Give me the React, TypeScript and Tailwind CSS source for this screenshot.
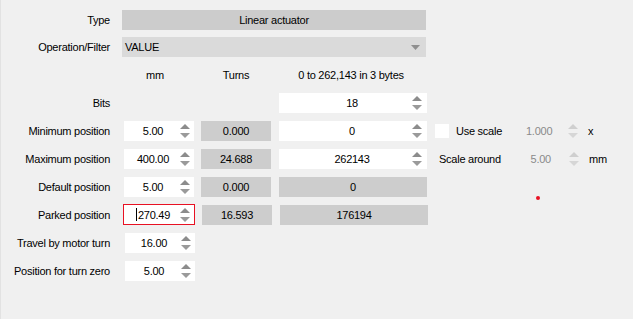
import React from "react";

function Spin({ disabled = false }: { disabled?: boolean }) {
  const up = disabled ? "#cfcfcf" : "#8c8c8c";
  const down = disabled ? "#d6d6d6" : "#9a9a9a";
  return (
    <div className="flex w-[14px] flex-col items-center justify-center gap-[4px]">
      <svg width="10" height="5" viewBox="0 0 10 5">
        <polygon points="0,5 5,0 10,5" fill={up} />
      </svg>
      <svg width="10" height="5" viewBox="0 0 10 5">
        <polygon points="0,0 10,0 5,5" fill={down} />
      </svg>
    </div>
  );
}

function NumInput({ value, active = false }: { value: string; active?: boolean }) {
  return (
    <div
      className={
        active
          ? "flex h-[21px] w-[72px] -my-px -ml-px items-center border border-[#e81123] bg-white pr-[2px]"
          : "flex h-[20px] w-[70px] items-center bg-white pr-[2px]"
      }
    >
      <span className="flex-1 pl-[4px] text-center">
        {active && <span className="mr-px inline-block h-[13px] w-px translate-y-[2px] bg-black" />}
        {value}
      </span>
      <Spin />
    </div>
  );
}

function WideInput({ value }: { value: string }) {
  return (
    <div className="flex h-[20px] w-[148px] items-center bg-white pr-[3px]">
      <span className="flex-1 pl-[15px] text-center">{value}</span>
      <Spin />
    </div>
  );
}

function GrayBox({ value, wide = false }: { value: string; wide?: boolean }) {
  return (
    <div
      className={
        (wide ? "w-[148px] " : "w-[70px] ") +
        "flex h-[20px] items-center justify-center bg-[#cdcdcd]"
      }
    >
      {value}
    </div>
  );
}

function Label({ children }: { children: React.ReactNode }) {
  return <div className="w-[110px] shrink-0 pr-px text-right">{children}</div>;
}

export default function App() {
  return (
    <div
      className="h-[319px] w-[633px] overflow-hidden border-l border-[#e2e2e2] bg-[#f0f0f0] text-[11px] tracking-[-0.25px] text-black"
      style={{ fontFamily: '"Liberation Sans", Arial, sans-serif' }}
    >
      <div className="flex flex-col gap-2 pt-[10px]">
        <div className="flex h-[20px] items-center">
          <Label>Type</Label>
          <div className="ml-[11px] flex h-[20px] w-[304px] items-center justify-center bg-[#cccccc]">
            Linear actuator
          </div>
        </div>
        <div className="-mt-px flex h-[20px] items-center">
          <Label>Operation/Filter</Label>
          <div className="ml-[11px] flex h-[20px] w-[304px] items-center justify-between bg-[#dadada] pl-[3px] pr-[6px]">
            <span>VALUE</span>
            <svg width="9" height="5" viewBox="0 0 9 5">
              <polygon points="0,0 9,0 4.5,5" fill="#8f8f8f" />
            </svg>
          </div>
        </div>
        <div className="flex h-[20px] items-center">
          <Label>{""}</Label>
          <div className="ml-[12px] flex gap-[8px]">
            <div className="w-[70px] pr-[6px] text-center">mm</div>
            <div className="w-[70px] text-center">Turns</div>
            <div className="w-[148px] pr-[4px] text-center">0 to 262,143 in 3 bytes</div>
          </div>
        </div>
        <div className="flex h-[20px] items-center">
          <Label>Bits</Label>
          <div className="ml-[168px]">
            <WideInput value="18" />
          </div>
        </div>
        <div className="flex h-[20px] items-center">
          <Label>Minimum position</Label>
          <div className="ml-[13px] flex gap-[7px]">
            <NumInput value="5.00" />
            <GrayBox value="0.000" />
            <div className="ml-px">
              <WideInput value="0" />
            </div>
          </div>
          <div className="ml-[8px] flex items-center">
            <div className="h-[14px] w-[14px] bg-white" />
            <span className="ml-[7px] w-[70px]">Use scale</span>
            <span className="w-[26px] text-right text-[#8a8a8a]">1.000</span>
            <div className="ml-[14px]">
              <Spin disabled />
            </div>
            <span className="ml-[8px]">x</span>
          </div>
        </div>
        <div className="flex h-[20px] items-center">
          <Label>Maximum position</Label>
          <div className="ml-[13px] flex gap-[7px]">
            <NumInput value="400.00" />
            <GrayBox value="24.688" />
            <div className="ml-px">
              <WideInput value="262143" />
            </div>
          </div>
          <div className="ml-[12px] flex items-center">
            <span className="w-[83px]">Scale around</span>
            <span className="w-[29px] text-right text-[#8a8a8a]">5.00</span>
            <div className="ml-[16px]">
              <Spin disabled />
            </div>
            <span className="ml-[8px]">mm</span>
          </div>
        </div>
        <div className="flex h-[20px] items-center">
          <Label>Default position</Label>
          <div className="ml-[13px] flex gap-[7px]">
            <NumInput value="5.00" />
            <GrayBox value="0.000" />
            <div className="ml-px">
              <GrayBox value="0" wide />
            </div>
          </div>
          <div className="ml-[109px] h-[4px] w-[4px] translate-y-[11px] rounded-full bg-[#e81123]" />
        </div>
        <div className="flex h-[20px] items-center">
          <Label>Parked position</Label>
          <div className="ml-[13px] flex gap-[7px]">
            <NumInput value="270.49" active />
            <GrayBox value="16.593" />
            <div className="ml-px">
              <GrayBox value="176194" wide />
            </div>
          </div>
        </div>
        <div className="flex h-[20px] items-center">
          <Label>Travel by motor turn</Label>
          <div className="ml-[14px]">
            <NumInput value="16.00" />
          </div>
        </div>
        <div className="flex h-[20px] items-center">
          <Label>Position for turn zero</Label>
          <div className="ml-[14px]">
            <NumInput value="5.00" />
          </div>
        </div>
      </div>
    </div>
  );
}
